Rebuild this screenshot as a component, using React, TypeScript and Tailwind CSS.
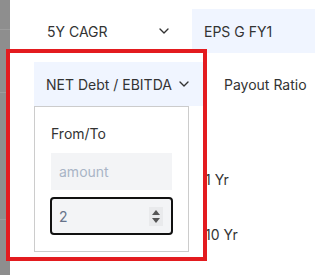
import * as React from 'react';
import { ChevronDown } from 'lucide-react';

const font = { fontFamily: 'Inter, "Noto Sans", sans-serif' };

const App: React.FC = () => {
  return (
    <div className="relative flex h-[275px] w-[315px] overflow-hidden bg-white text-[14px] text-[#333]" style={font}>
      {/* left gray rail */}
      <div className="flex w-[10px] shrink-0 flex-col bg-[#8e8e8e]">
        <div className="mt-[29px] h-px bg-[#9c9c9c]"></div>
        <div className="mt-[62px] h-px bg-[#9c9c9c]"></div>
        <div className="mt-[126px] h-px bg-[#9c9c9c]"></div>
      </div>

      <div className="flex-1 pt-[9px]">
        {/* row 1 */}
        <div className="flex h-[44px]">
          <div className="ml-[24px] flex w-[158px] items-center pl-[13px]">
            <span className="flex-1">5Y CAGR</span>
            <ChevronDown className="mr-[20px] h-4 w-4 text-[#333]" strokeWidth={2} />
          </div>
          <div className="flex flex-1 items-center bg-[#f0f5ff] pl-3">EPS G FY1</div>
        </div>

        {/* row 2 */}
        <div className="mt-[9px] flex h-[44px]">
          <div className="ml-[24px] flex w-[172px] items-center bg-[#f0f5ff] pl-3">
            <span className="flex-1">NET Debt / EBITDA</span>
            <ChevronDown className="mr-[14px] h-4 w-4 text-[#333]" strokeWidth={2} />
          </div>
          <div className="ml-[18px] flex items-center">Payout Ratio</div>
        </div>

        {/* dropdown + options behind */}
        <div className="flex">
          <div className="ml-[24px] w-[155px] border border-[#cccccc] bg-white px-4 pb-[16px] pt-[17px]">
            <div className="leading-5">From/To</div>
            <div className="mt-[9px] flex h-[37px] w-[121px] items-center bg-[#f3f4f6] pl-2 text-[#a9b4c6]">amount</div>
            <div className="-ml-px mt-[7px] flex h-[38px] w-[123px] items-center rounded-[4px] border-2 border-[#111] bg-[#f3f4f6] pl-[7px] pr-[8px] text-[#67738a]">
              <span className="flex-1">2</span>
              <div className="flex h-[19px] w-[14px] flex-col items-center justify-center gap-[3px] bg-[#e9eaec]">
                <svg width="8" height="5" viewBox="0 0 8 5"><path d="M4 0 L8 5 L0 5 Z" fill="#555" /></svg>
                <svg width="8" height="5" viewBox="0 0 8 5"><path d="M0 0 L8 0 L4 5 Z" fill="#555" /></svg>
              </div>
            </div>
          </div>
          <div className="ml-[16px] flex flex-col">
            <span className="mt-[63px]">1 Yr</span>
            <span className="mt-[34px]">10 Yr</span>
          </div>
        </div>
      </div>

      {/* red annotation frame */}
      <div className="absolute left-[6px] top-[49px] h-[212px] w-[201px] border-4 border-[#e31b1f]"></div>
    </div>
  );
};

export default App;
